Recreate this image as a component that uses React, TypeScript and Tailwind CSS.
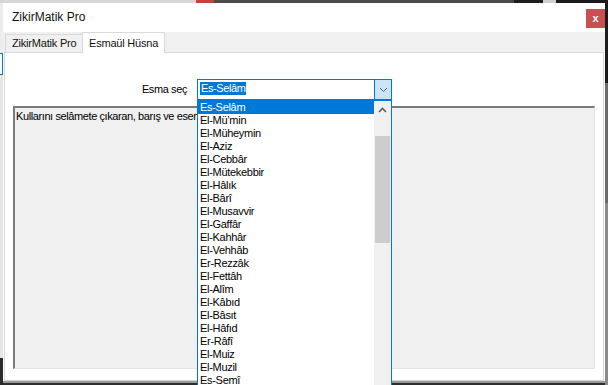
const esmalar = [
  "Es-Selâm",
  "El-Mü’min",
  "El-Müheymin",
  "El-Aziz",
  "El-Cebbâr",
  "El-Mütekebbir",
  "El-Hâlık",
  "El-Bârî",
  "El-Musavvir",
  "El-Gaffâr",
  "El-Kahhâr",
  "El-Vehhâb",
  "Er-Rezzâk",
  "El-Fettâh",
  "El-Alîm",
  "El-Kâbıd",
  "El-Bâsıt",
  "El-Hâfıd",
  "Er-Râfî",
  "El-Muiz",
  "El-Muzil",
  "Es-Semî",
  "El-Basîr",
];

const ChevronDown = () => (
  <svg width="9" height="6" viewBox="0 0 9 6" fill="none">
    <path d="M1 1l3.5 3.5L8 1" stroke="#606060" strokeWidth="1" />
  </svg>
);

const ChevronUp = () => (
  <svg width="9" height="6" viewBox="0 0 9 6" fill="none">
    <path d="M1 5l3.5-3.5L8 5" stroke="#606060" strokeWidth="1.6" />
  </svg>
);

export default function App() {
  const selected = "Es-Selâm";

  return (
    <div className="relative h-[385px] w-[608px] overflow-hidden bg-[#2e2e2e] font-['Liberation_Sans',Arial,sans-serif] text-black">
      {/* desktop behind the window */}
      <div className="absolute inset-x-0 top-0 flex h-[3px]">
        <div className="w-[196px] bg-[#d6d6d6]" />
        <div className="w-[18px] bg-[#c8403a]" />
        <div className="w-[300px] bg-[#4a4a4a]" />
        <div className="w-[29px] bg-[#1e1e1e]" />
        <div className="w-[13px] bg-[#cfcfcf]" />
        <div className="flex-1 bg-[#1a1a1a]" />
      </div>
      <div className="absolute bottom-0 left-0 top-[3px] flex w-[3px] flex-col">
        <div className="h-[50px] bg-[#ececec]" />
        <div className="h-[22px] border-y border-r border-[#0078d7] bg-white" />
        <div className="h-[283px] bg-[#e6e6e6]" />
        <div className="flex-1 bg-[#2b2b2b]" />
      </div>
      <div className="absolute bottom-0 right-0 top-[3px] flex w-[3px] flex-col">
        <div className="h-[80px] bg-[#1c1c1c]" />
        <div className="h-[120px] bg-[#6b6b6b]" />
        <div className="flex-1 bg-[#8a8a8a]" />
      </div>

      {/* window */}
      <div className="absolute left-[3px] top-[3px] flex h-[380px] w-[602px] flex-col border-b-2 border-[#9a9a9a] bg-white">
        {/* title bar */}
        <div className="flex h-[29px] items-start justify-between">
          <div className="pl-[9px] pt-[7px] text-[12px] leading-[15px] text-[#111]">ZikirMatik Pro</div>
          <div className="mt-[6px] flex h-[19px] w-[19px] items-center justify-center bg-[#c75050] text-[11px] font-bold leading-none text-white">
            x
          </div>
        </div>

        {/* tabs */}
        <div className="flex h-[20px] items-start bg-[#f0f0f0] pl-[2px]">
          <div className="mt-[2px] flex h-[18px] w-[77px] items-center border-l border-t border-[#d9d9d9] pl-[6px] text-[11px] tracking-[-0.2px] text-[#111]">
            ZikirMatik Pro
          </div>
          <div className="relative z-10 flex h-[21px] w-[83px] items-center border-x border-t border-[#d9d9d9] bg-white pl-[6px] text-[11px] tracking-[-0.2px] text-[#111]">
            Esmaül Hüsna
          </div>
        </div>

        {/* tab page */}
        <div className="ml-[1px] flex h-[329px] w-[600px] flex-col border border-[#d9d9d9] bg-white">
          <div className="mt-[26px] flex items-center">
            <div className="w-[182px] text-right text-[11px] tracking-[-0.4px]">Esma seç</div>
            <div className="relative ml-[10px] flex h-[21px] w-[195px] border border-[#0078d7] bg-white">
              <div className="flex flex-1 items-start pl-[2px] pt-[2px]">
                <span className="bg-[#0078d7] px-[1px] text-[11px] leading-[13px] tracking-[-0.4px] text-white">{selected}</span>
              </div>
              <div className="flex w-[17px] items-center justify-center border-l border-[#0078d7] bg-[#cce4f7]">
                <ChevronDown />
              </div>

              {/* open dropdown list */}
              <div className="absolute left-[-1px] top-[20px] z-20 flex h-[300px] w-[195px] border border-[#0078d7] bg-white">
                <ul className="flex-1">
                  {esmalar.map((e) => (
                    <li
                      key={e}
                      className={`h-[13px] pl-[2px] text-[11px] leading-[13px] tracking-[-0.3px] ${
                        e === selected ? "bg-[#0078d7] text-white" : "text-black"
                      }`}
                    >
                      {e}
                    </li>
                  ))}
                </ul>
                <div className="flex w-[17px] flex-col bg-[#f0f0f0]">
                  <div className="flex h-[17px] items-center justify-center">
                    <ChevronUp />
                  </div>
                  <div className="ml-[1px] mr-[1px] mt-[18px] h-[107px] bg-[#cdcdcd]" />
                </div>
              </div>
            </div>
          </div>

          <div className="mx-[8px] mt-[6px] h-[263px] border-b border-l-2 border-r border-t-2 border-b-[#e3e3e3] border-l-[#7a7a7a] border-r-[#e3e3e3] border-t-[#7a7a7a] bg-[#f0f0f0] pl-[1px] pt-[2px]">
            <p className="whitespace-nowrap text-[11px] leading-[13px] tracking-[-0.4px]">
              Kullarını selâmete çıkaran, barış ve esenlik veren
            </p>
          </div>
        </div>
      </div>
    </div>
  );
}
